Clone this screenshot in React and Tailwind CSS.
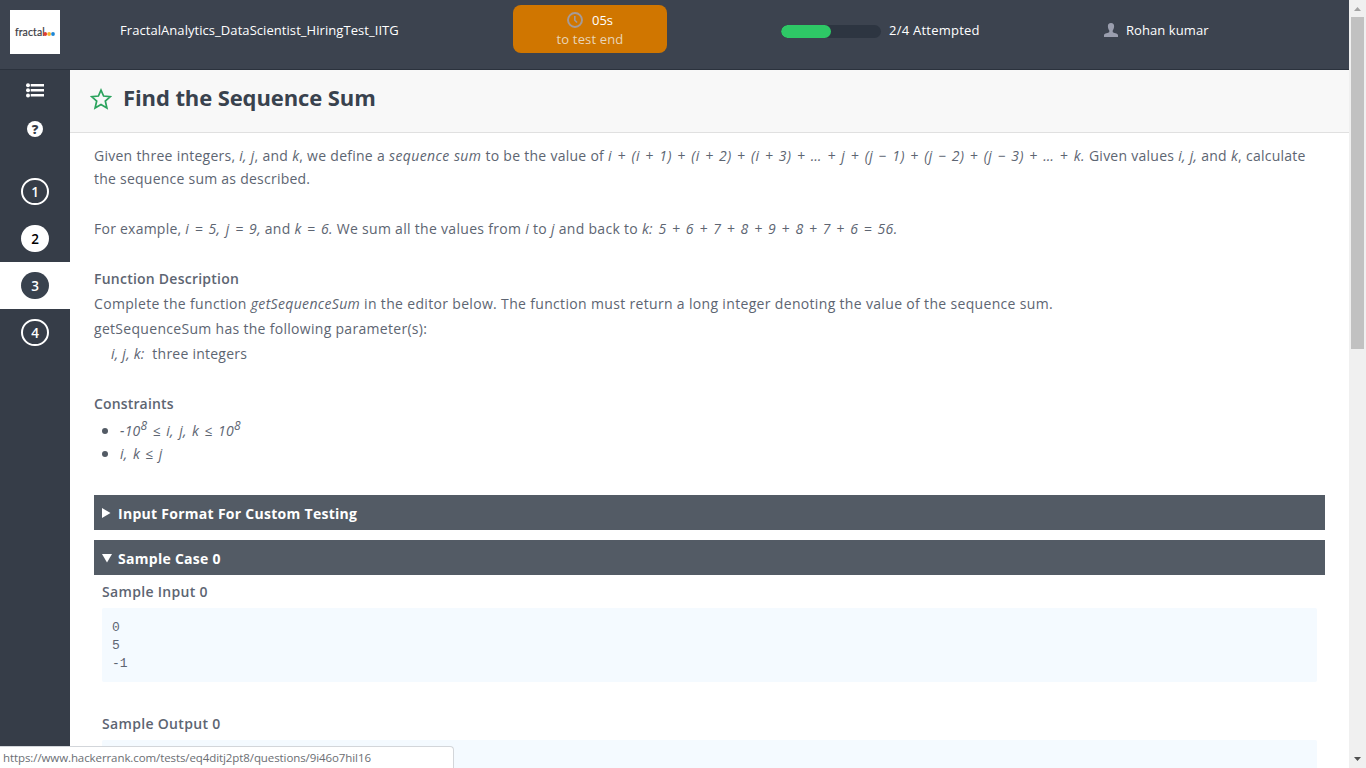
import React from "react";

const NUMBERS = [
  { n: 1, row: "bg-[#363d48]", dot: "border-2 border-white text-white" },
  { n: 2, row: "bg-[#363d48]", dot: "bg-white text-black" },
  { n: 3, row: "bg-white", dot: "bg-[#39424e] text-white" },
  { n: 4, row: "bg-[#363d48]", dot: "border-2 border-white text-white" },
];

function Logo() {
  return (
    <div className="flex h-[44px] w-[50px] items-center bg-white pl-[5px]">
      <span className="font-['Lato'] text-[10.5px] leading-[12px] tracking-[0.1px] text-[#3c3c44] [-webkit-text-stroke:0.2px_#3c3c44]">fractal</span>
      <svg width="12" height="6" viewBox="0 0 12 6" className="mt-[4px] -ml-[2px] shrink-0">
        <circle cx="2.2" cy="3" r="1.9" fill="#e23b2e" />
        <circle cx="6.1" cy="3" r="1.9" fill="#f5b32f" />
        <circle cx="10" cy="3" r="1.9" fill="#1b87d6" />
      </svg>
    </div>
  );
}

function Header() {
  return (
    <header className="flex h-[70px] shrink-0 border-b border-[#2b323d] bg-[#3c434f] text-[13px] text-white">
      <div className="w-[120px] pt-[10px] pl-[10px]">
        <Logo />
      </div>
      <div className="w-[393px] pt-[20px] leading-[20px]">
        <span className="whitespace-nowrap tracking-[0.06px]">FractalAnalytics_DataScientist_HiringTest_IITG</span>
      </div>
      <div className="mt-[5px] flex h-[48px] w-[154px] flex-col items-center rounded-lg bg-[#d07600] pt-[5px]">
        <div className="flex h-[20px] items-center">
          <svg width="16" height="16" viewBox="0 0 16 16" fill="none" stroke="#a59b9a" className="mr-[9px]">
            <circle cx="8" cy="8" r="7" strokeWidth="1.9" />
            <path d="M7.8 4v4.2l2.3 2.3" strokeWidth="1.6" />
          </svg>
          <span className="pt-px">05s</span>
        </div>
        <div className="leading-[19px] tracking-[0.15px] text-[#e8d5b9]">to test end</div>
      </div>
      <div className="ml-[114px] mt-[20px] flex h-[20px] w-[323px] items-center">
        <div className="mt-[3px] h-[13px] w-[100px] overflow-hidden rounded-full bg-[#2d3541]">
          <div className="h-full w-1/2 rounded-full bg-[#2ec866]" />
        </div>
        <span className="ml-[8px] pt-px tracking-[0.24px]">2/4 Attempted</span>
      </div>
      <div className="mt-[20px] flex h-[20px] items-center">
        <svg width="15" height="14" viewBox="0 0 15 14" fill="#9a9eae" className="mr-[7px]">
          <path d="M7 0C9.2 0 10.2 1.4 10.1 3.6C10 5.5 9.4 6.6 8.7 7.4V9C9.2 10 14 10.2 14 12.2V14H0V12.2C0 10.2 4.8 10 5.3 9V7.4C4.5 6.6 4 5.5 3.9 3.6C3.8 1.4 4.8 0 7 0Z" />
        </svg>
        <span className="pt-px tracking-[0.08px]">Rohan kumar</span>
      </div>
    </header>
  );
}

function Sidebar() {
  return (
    <nav className="w-[70px] shrink-0 bg-[#363d48]">
      <div className="flex h-[98px] flex-col items-center pt-[13px]">
        <svg width="18" height="15" viewBox="0 0 18 15" fill="white">
          <circle cx="2" cy="2.2" r="2" />
          <circle cx="2" cy="7.3" r="2" />
          <circle cx="2" cy="12.4" r="2" />
          <path d="M4.7 1H18v2.6H4.7zM4.7 6H18v2.6H4.7zM4.7 11H18v2.6H4.7z" />
        </svg>
        <div className="mt-[23px] flex size-[16px] items-center justify-center rounded-full bg-white text-[13px] font-extrabold leading-none text-[#363d48]">?</div>
      </div>
      {NUMBERS.map((item) => (
        <div key={item.n} className={"flex h-[47px] items-center justify-center " + item.row}>
          <div className={"flex h-[27px] w-[28px] items-center justify-center rounded-full pt-px text-[13.5px] font-semibold " + item.dot}>{item.n}</div>
        </div>
      ))}
    </nav>
  );
}

function Bar({ open, children }) {
  return (
    <div className="flex h-[35px] items-center bg-[#535b65] pl-[8px] font-bold text-white">
      <svg width="10" height="10" viewBox="0 0 10 10" fill="white" className="mt-px mr-[6px]">
        <path d={open ? "M0 1H10L5 9.5Z" : "M0 0L8.5 5L0 10Z"} />
      </svg>
      <span className="pt-[2px] tracking-[0.28px]">{children}</span>
    </div>
  );
}

function Formula({ children }) {
  return <i className="tracking-[0.35px] [word-spacing:1.5px]">{children}</i>;
}

function Problem() {
  return (
    <div className="h-[635px] overflow-hidden pr-[24px] pl-[24px] pt-[11px] text-[14px] tracking-[0.24px] whitespace-nowrap text-[#5d6572]">
      <p className="h-[23px] leading-[23px] [word-spacing:0.15px]">
        Given three integers, <i>i, j</i>, and <i>k</i>, we define a <i className="tracking-[0.4px]">sequence sum</i> to be the value of <i className="tracking-[0.38px] [word-spacing:1.55px]">i + (i + 1) + (i + 2) + (i + 3) + … + j + (j − 1) + (j − 2) + (j − 3) + … + k.</i> Given values <i>i, j,</i> and <i>k</i>, calculate
      </p>
      <p className="h-[23px] leading-[23px]">the sequence sum as described.</p>
      <p className="mt-[27px] h-[23px] leading-[23px]">
        For example, <Formula>i = 5, j = 9,</Formula> and <Formula>k = 6.</Formula> <span className="tracking-[0.3px]">We sum all the values from <i>i</i> to <i>j</i> and back to</span> <Formula>k: 5 + 6 + 7 + 8 + 9 + 8 + 7 + 6 = 56.</Formula>
      </p>
      <h2 className="mt-[26px] h-[25px] font-semibold leading-[25px]">Function Description</h2>
      <p className="h-[25px] leading-[25px] tracking-[0.33px]">
        Complete the function <i>getSequenceSum</i> in the editor below. The function must return a long integer denoting the value of the sequence sum.
      </p>
      <p className="h-[25px] leading-[25px] tracking-[0.3px]">getSequenceSum has the following parameter(s):</p>
      <p className="h-[25px] pl-[17px] leading-[25px]"><i>i, j, k:</i>&nbsp; three integers</p>
      <h2 className="mt-[25px] h-[25px] font-semibold leading-[25px] tracking-[0.15px]">Constraints</h2>
      <ul className="h-[79px] pt-[3px] pl-[8px] [&_i]:tracking-[0.25px]">
        <li className="flex h-[23px] items-center">
          <span className="mr-[12px] size-[6px] rounded-full bg-[#535b65]" />
          <span className="leading-[23px]"><Formula>-10<sup className="text-[12px]">8</sup> ≤ i, j, k ≤ 10<sup className="text-[12px]">8</sup></Formula></span>
        </li>
        <li className="flex h-[23px] items-center">
          <span className="mr-[12px] size-[6px] rounded-full bg-[#535b65]" />
          <Formula>i, k ≤ j</Formula>
        </li>
      </ul>
      <Bar>Input Format For Custom Testing</Bar>
      <div className="mt-[10px]">
        <Bar open>Sample Case 0</Bar>
      </div>
      <section className="px-[8px]">
        <h3 className="h-[33px] font-semibold leading-[34px] tracking-[0.32px]">Sample Input 0</h3>
        <pre className="h-[74px] rounded-xs bg-[#f4faff] pt-[11px] pl-[10px] font-['Liberation_Mono',monospace] text-[13px] leading-[18px] tracking-normal">{"0\n5\n-1"}</pre>
        <h3 className="mt-[25px] h-[33px] font-semibold leading-[34px] tracking-[0.32px]">Sample Output 0</h3>
        <div className="h-[74px] rounded-xs bg-[#f4faff]" />
      </section>
    </div>
  );
}

function Scrollbar() {
  return (
    <div className="flex h-[768px] w-[17px] shrink-0 flex-col items-center bg-[#f0f0f0]">
      <svg width="17" height="17" viewBox="0 0 17 17" fill="#a3a3a3"><path d="M5 11L8.5 7L12 11Z" /></svg>
      <div className="h-[332px] w-[13px] bg-[#c1c1c1]" />
      <svg width="17" height="17" viewBox="0 0 17 17" fill="#505050" className="mt-auto"><path d="M5 6L8.5 10L12 6Z" /></svg>
    </div>
  );
}

export default function App() {
  return (
    <div className="relative flex h-[768px] w-[1366px] overflow-hidden bg-white font-['Open_Sans',sans-serif]">
      <div className="flex w-[1349px] flex-col">
        <Header />
        <div className="flex h-[698px]">
          <Sidebar />
          <main className="w-[1279px]">
            <div className="flex h-[63px] border-b border-[#e0e0e0] bg-[#f8f8f8] pl-[20px]">
              <svg width="22" height="22" viewBox="0 0 22 22" fill="none" stroke="#2ba35d" strokeWidth="1.7" className="mt-[18px]">
                <path d="M11 2.2L13.6 8L20.4 8.6L15.3 13L16.9 20L11 16.5L5.1 20L6.7 13L1.6 8.6L8.4 8Z" />
              </svg>
              <h1 className="ml-[11px] pt-[12px] text-[22px] font-bold leading-[30px] tracking-[-0.1px] text-[#39424e]">Find the Sequence Sum</h1>
            </div>
            <Problem />
          </main>
        </div>
      </div>
      <Scrollbar />
      <div className="absolute bottom-0 left-0 h-[22px] w-[454px] rounded-tr border-t border-r border-[#d3d6da] bg-white pl-[3px] text-[11.5px] leading-[22px] tracking-[-0.09px] text-[#6b6e73]">
        https://www.hackerrank.com/tests/eq4ditj2pt8/questions/9i46o7hil16
      </div>
    </div>
  );
}
